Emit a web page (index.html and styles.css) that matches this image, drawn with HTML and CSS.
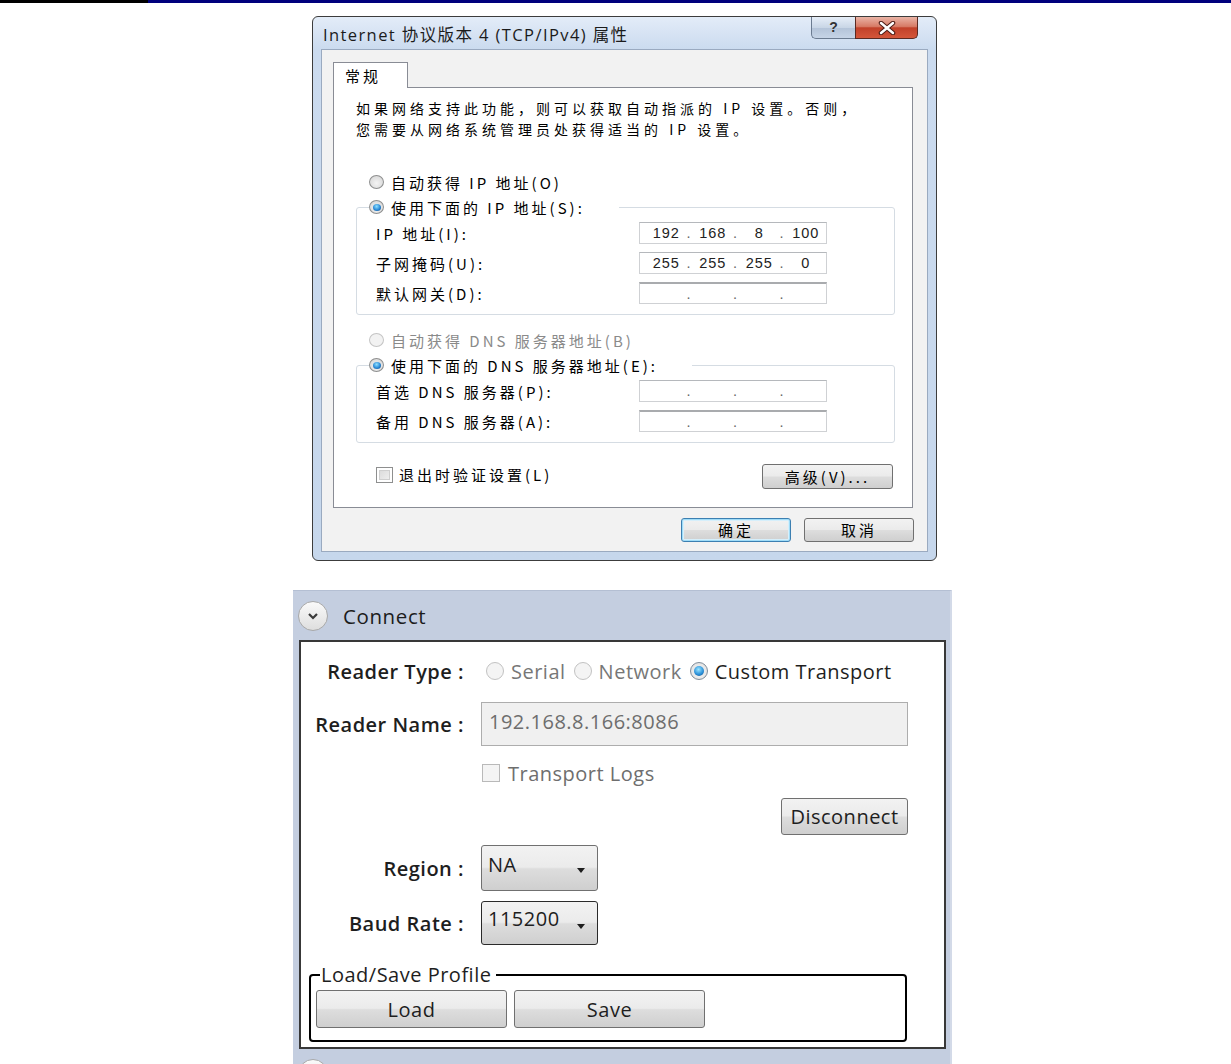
FILE: index.html
```html
<!DOCTYPE html>
<html lang="zh-CN">
<head>
    <meta charset="UTF-8">
    <meta name="viewport" content="width=device-width, initial-scale=1.0">
    <title>IPv4 / Connect</title>
    <link rel="stylesheet" href="styles.css">
</head>
<body>
    <div class="topline"></div>

    <!-- Win7 style TCP/IPv4 properties dialog -->
    <div class="dialog">
        <div class="titlebar">
            <span class="title">Internet 协议版本 4 (TCP/IPv4) 属性</span>
            <div class="caption-btns">
                <span class="cap-help">?</span>
                <span class="cap-close">
                    <svg width="18" height="14" viewBox="0 0 18 14">
                        <path d="M3 2 L15 12 M15 2 L3 12" stroke="#4a1a14" stroke-width="4.5" stroke-linecap="round"/>
                        <path d="M3 2 L15 12 M15 2 L3 12" stroke="#fff" stroke-width="2.5" stroke-linecap="round"/>
                    </svg>
                </span>
            </div>
        </div>
        <div class="client">
            <div class="tabs"><span class="tab">常规</span></div>
            <div class="tabpage">
                <p class="intro">如果网络支持此功能，则可以获取自动指派的 IP 设置。否则，<br>您需要从网络系统管理员处获得适当的 IP 设置。</p>

                <div class="opt"><span class="radio"></span>自动获得 IP 地址(O)</div>
                <fieldset class="grp">
                    <legend class="opt"><span class="radio on"></span>使用下面的 IP 地址(S):</legend>
                    <div class="row">
                        <span class="lbl">IP 地址(I):</span>
                        <span class="ipbox">
                            <span class="oct">192</span><span class="oct">168</span><span class="oct">8</span><span class="oct">100</span>
                        </span>
                    </div>
                    <div class="row">
                        <span class="lbl">子网掩码(U):</span>
                        <span class="ipbox">
                            <span class="oct">255</span><span class="oct">255</span><span class="oct">255</span><span class="oct">0</span>
                        </span>
                    </div>
                    <div class="row">
                        <span class="lbl">默认网关(D):</span>
                        <span class="ipbox dark-top">
                            <span class="oct"></span><span class="oct"></span><span class="oct"></span><span class="oct"></span>
                        </span>
                    </div>
                </fieldset>

                <div class="opt disabled"><span class="radio"></span>自动获得 DNS 服务器地址(B)</div>
                <fieldset class="grp">
                    <legend class="opt"><span class="radio on"></span>使用下面的 DNS 服务器地址(E):</legend>
                    <div class="row">
                        <span class="lbl">首选 DNS 服务器(P):</span>
                        <span class="ipbox">
                            <span class="oct"></span><span class="oct"></span><span class="oct"></span><span class="oct"></span>
                        </span>
                    </div>
                    <div class="row">
                        <span class="lbl">备用 DNS 服务器(A):</span>
                        <span class="ipbox dark-top">
                            <span class="oct"></span><span class="oct"></span><span class="oct"></span><span class="oct"></span>
                        </span>
                    </div>
                </fieldset>

                <div class="check-row">
                    <span class="check"><span class="box"></span>退出时验证设置(L)</span>
                    <button class="wbtn advanced">高级(V)...</button>
                </div>
            </div>
            <div class="dlg-btns">
                <button class="wbtn default">确定</button>
                <button class="wbtn">取消</button>
            </div>
        </div>
    </div>

    <!-- Reader connect panel -->
    <div class="panel">
        <div class="panel-head">
            <span class="chev">
                <svg width="14" height="10" viewBox="0 0 14 10">
                    <path d="M3 3 L7 7 L11 3" fill="none" stroke="#3a3a3a" stroke-width="2.2"/>
                </svg>
            </span>
            <span class="panel-title">Connect</span>
        </div>
        <div class="panel-body">
            <div class="frow type-row">
                <span class="flabel">Reader Type :</span>
                <span class="ropt off"><span class="pradio"></span>Serial</span>
                <span class="ropt off"><span class="pradio"></span>Network</span>
                <span class="ropt"><span class="pradio on"></span>Custom Transport</span>
            </div>
            <div class="frow name-row">
                <span class="flabel">Reader Name :</span>
                <span class="textbox">192.168.8.166:8086</span>
            </div>
            <div class="frow logs-row">
                <span class="flabel"></span>
                <span class="pcheck"><span class="pbox"></span>Transport Logs</span>
            </div>
            <div class="frow disc-row">
                <button class="pbtn disconnect">Disconnect</button>
            </div>
            <div class="frow sel-row">
                <span class="flabel">Region :</span>
                <span class="combo">NA</span>
            </div>
            <div class="frow sel-row">
                <span class="flabel">Baud Rate :</span>
                <span class="combo focused">115200</span>
            </div>
            <fieldset class="profile">
                <legend>Load/Save Profile</legend>
                <button class="pbtn wide">Load</button>
                <button class="pbtn wide">Save</button>
            </fieldset>
        </div>
        <div class="panel-head">
            <span class="chev"></span>
        </div>
    </div>
</body>
</html>
```

FILE: styles.css
```css
body {
    margin: 0;
    background: #fff;
    font-family: "Open Sans", "Noto Sans", sans-serif;
    overflow: hidden;
}
.topline {
    height: 3px;
    background: linear-gradient(to right, #000 148px, #00007c 148px);
}

/* ---------- dialog ---------- */
.dialog {
    margin: 13px 0 0 312px;
    width: 625px;
    height: 545px;
    box-sizing: border-box;
    border: 1px solid #3c3c3c;
    border-radius: 6px;
    background: linear-gradient(to bottom, #e3ecf8 0, #cbdbef 32px, #c6d7ec 100%);
    font-family: "Noto Sans CJK SC", sans-serif;
    font-size: 15px;
    letter-spacing: 3px;
    color: #000;
    display: flex;
    flex-direction: column;
}
.titlebar {
    height: 32px;
    display: flex;
    justify-content: space-between;
    align-items: flex-start;
    padding: 0 18px 0 10px;
}
.title {
    font-family: "Open Sans", "Noto Sans CJK SC", sans-serif;
    font-size: 16.5px;
    letter-spacing: 1.4px;
    color: #1b1b1b;
    margin-top: 5px;
}
.caption-btns {
    display: flex;
    height: 22px;
}
.cap-help {
    width: 43px;
    border: 1px solid #6b7b90;
    border-top: none;
    border-right: none;
    border-radius: 0 0 0 5px;
    background: linear-gradient(#e6eef8 0, #c9d6e6 50%, #b3c3d8 51%, #c6d4e6 100%);
    font-family: "Liberation Sans", sans-serif;
    font-size: 14px;
    font-weight: bold;
    letter-spacing: 0;
    color: #333;
    text-align: center;
    line-height: 20px;
}
.cap-close {
    width: 61px;
    border: 1px solid #5a2a22;
    border-top: none;
    border-radius: 0 0 5px 0;
    background: linear-gradient(#eab4a6 0, #d77b66 45%, #c1412a 52%, #d4563a 100%);
    display: flex;
    align-items: center;
    justify-content: center;
}
.client {
    flex: 1;
    margin: 0 8px 8px;
    border: 1px solid #9aaac0;
    background: #f2f2f2;
    padding: 12px 13px 0 11px;
}
.tabs {
    display: flex;
}
.tab {
    width: 75px;
    height: 26px;
    box-sizing: border-box;
    border: 1px solid #898c95;
    border-bottom: none;
    background: #fff;
    padding: 2px 0 0 11px;
    margin-bottom: -1px;
    position: relative;
}
.tabpage {
    height: 421px;
    box-sizing: border-box;
    border: 1px solid #898c95;
    background: #fff;
    padding: 0 17px 0 22px;
    margin-right: 1px;
}
.intro {
    margin: 10px 0 0;
    font-size: 14px;
    letter-spacing: 4px;
    line-height: 20.5px;
}
.opt {
    display: flex;
    align-items: center;
    height: 18px;
    margin: 34px 0 0 13px;
}
.opt.disabled {
    color: #8a8a8a;
    margin-top: 16px;
}
.radio {
    width: 15px;
    height: 14px;
    border-radius: 50%;
    border: 1px solid #8e8f8f;
    background: radial-gradient(circle at 50% 60%, #f4f4f4 0, #dcdcdc 70%, #cfcfcf 100%);
    margin-right: 7px;
    box-sizing: border-box;
    display: flex;
    align-items: center;
    justify-content: center;
}
.opt.disabled .radio {
    border-color: #c4c4c4;
    background: #f2f2f2;
}
.radio.on::after {
    content: "";
    width: 8px;
    height: 7px;
    border-radius: 50%;
    background: radial-gradient(circle at 45% 35%, #8fe0ff 0, #2a8ad8 55%, #0d3f7a 100%);
}
.grp {
    margin: 7px 0 0;
    border: 1px solid #d5dce3;
    border-radius: 3px;
    padding: 6px 12px 10px;
}
.grp legend {
    margin: 0;
    padding: 0 34px 0 0;
}
.row {
    display: grid;
    grid-template-columns: 263px 188px;
    align-items: center;
    height: 22px;
    margin: 0 0 8px 7px;
}
.row:last-child {
    margin-bottom: 0;
}
.lbl {
    white-space: nowrap;
}
.ipbox {
    height: 22px;
    box-sizing: border-box;
    border: 1px solid #cfd1d4;
    border-top-color: #b5b8bc;
    background: #fff;
    display: flex;
    font-family: "Liberation Sans", sans-serif;
    font-size: 14.5px;
    letter-spacing: 1px;
    line-height: 20px;
    color: #222;
}
.ipbox.dark-top {
    border-top: 2px solid #a9abae;
}
/* one octet: separator dot, then the number centred in what is left */
.oct {
    flex: 1;
    display: grid;
    grid-template-columns: 6px 1fr;
    text-align: center;
}
.oct::before {
    content: "";
    text-align: left;
    color: #666;
}
.oct + .oct::before {
    content: ".";
}
.check-row {
    display: flex;
    justify-content: space-between;
    align-items: center;
    margin: 21px 2px 0 20px;
    height: 25px;
}
.check {
    display: flex;
    align-items: center;
    margin-top: -4px;
}
.check .box {
    width: 17px;
    height: 16px;
    box-sizing: border-box;
    border: 1px solid #8e8f8f;
    background: linear-gradient(135deg, #d6d6d6, #f4f4f4);
    box-shadow: inset 0 0 0 2px #fff, inset 0 0 0 3px #cfcfcf;
    margin-right: 6px;
}
.wbtn {
    font-family: "Noto Sans CJK SC", sans-serif;
    font-size: 15px;
    letter-spacing: 3px;
    color: #000;
    border: 1px solid #707070;
    border-radius: 3px;
    background: linear-gradient(#f2f2f2 0, #ebebeb 48%, #dddddd 52%, #cfcfcf 100%);
    padding: 0;
    line-height: 20px;
}
.advanced {
    width: 131px;
    height: 25px;
}
.dlg-btns {
    display: flex;
    justify-content: flex-end;
    gap: 13px;
    margin-top: 10px;
}
.dlg-btns .wbtn {
    width: 110px;
    height: 24px;
}
.wbtn.default {
    border-color: #3c7fb1;
    box-shadow: inset 0 0 0 1px #9fdcf8, inset 0 0 0 2px #d6effb;
}

/* ---------- connect panel ---------- */
.panel {
    margin: 29px 0 0 293px;
    width: 659px;
    background: #c4cee0;
    border-top: 1px solid #b4bfd3;
    border-right: 2px solid #d3dae8;
    box-sizing: border-box;
}
.panel-head {
    height: 49px;
    display: flex;
    align-items: center;
    padding-left: 5px;
    gap: 15px;
}
.chev {
    width: 30px;
    height: 30px;
    box-sizing: border-box;
    border-radius: 50%;
    border: 1px solid #a9a9a9;
    background: linear-gradient(#fafafa, #dedede);
    display: flex;
    align-items: center;
    justify-content: center;
}
.panel-title {
    font-size: 20.5px;
    letter-spacing: 0.6px;
    color: #1c1c1c;
}
.panel-body {
    margin-left: 6px;
    width: 647px;
    height: 409px;
    box-sizing: border-box;
    border: 2px solid #383838;
    background: #fff;
    padding-top: 10px;
    font-size: 20px;
    letter-spacing: 0.5px;
    color: #6e6e6e;
}
.frow {
    display: flex;
    align-items: center;
}
.flabel {
    width: 163px;
    flex: none;
    text-align: right;
    font-weight: 600;
    color: #1e1e1e;
    margin-right: 17px;
    white-space: nowrap;
}
.type-row {
    height: 38px;
}
.ropt {
    display: flex;
    align-items: center;
    color: #1e1e1e;
    margin-right: 6px;
    margin-left: 5px;
}
.ropt.off {
    color: #777;
    margin-left: 5px;
    margin-right: 3px;
}
.pradio {
    width: 18px;
    height: 18px;
    box-sizing: border-box;
    border-radius: 50%;
    border: 1px solid #a8a8a8;
    background: radial-gradient(circle at 50% 55%, #f8f8f8 0, #e4e4e4 70%, #d8d8d8 100%);
    margin-right: 7px;
    display: flex;
    align-items: center;
    justify-content: center;
}
.ropt.off .pradio {
    border-color: #c2c2c2;
    background: #f4f4f4;
}
.pradio.on {
    border-color: #7f8c99;
}
.pradio.on::after {
    content: "";
    width: 10px;
    height: 10px;
    border-radius: 50%;
    background: radial-gradient(circle at 45% 35%, #9be6ff 0, #2d93db 55%, #0c4a86 100%);
}
.name-row {
    margin-top: 12px;
    height: 44px;
}
.textbox {
    width: 427px;
    height: 44px;
    box-sizing: border-box;
    border: 1px solid #adadad;
    background: #f0f0f0;
    padding: 5px 0 0 7px;
    color: #6d6d6d;
}
.logs-row {
    margin-top: 14px;
    height: 26px;
}
.pcheck {
    display: flex;
    align-items: center;
    margin-left: 1px;
}
.pbox {
    width: 18px;
    height: 18px;
    box-sizing: border-box;
    border: 1px solid #b9b9b9;
    background: #f4f4f4;
    margin-right: 8px;
}
.disc-row {
    margin-top: 12px;
    justify-content: flex-end;
    padding-right: 36px;
}
.pbtn {
    font-family: "Open Sans", "Noto Sans", sans-serif;
    font-size: 20px;
    letter-spacing: 0.5px;
    color: #1e1e1e;
    border: 1px solid #707070;
    border-radius: 3px;
    background: linear-gradient(#f2f2f2 0, #ebebeb 48%, #dddddd 52%, #cfcfcf 100%);
    padding: 0;
}
.disconnect {
    width: 127px;
    height: 37px;
}
.sel-row {
    margin-top: 10px;
    height: 46px;
}
.sel-row + .sel-row {
    height: 44px;
}
.combo {
    width: 117px;
    height: 100%;
    box-sizing: border-box;
    border: 1px solid #707070;
    border-radius: 3px;
    background: linear-gradient(#f2f2f2 0, #ebebeb 48%, #dddddd 52%, #cfcfcf 100%);
    display: flex;
    justify-content: space-between;
    align-items: flex-start;
    padding: 5px 12px 0 6px;
    color: #1e1e1e;
}
.combo::after {
    content: "";
    margin-top: 17px;
    border-left: 4px solid transparent;
    border-right: 4px solid transparent;
    border-top: 5px solid #1e1e1e;
}
.combo.focused {
    border-color: #2a2a2a;
    padding-top: 3px;
}
.combo.focused::after {
    margin-top: 19px;
}
.profile {
    margin: 19px 0 0 8px;
    width: 598px;
    height: 78px;
    box-sizing: border-box;
    border: 2px solid #000;
    border-radius: 4px;
    padding: 0 0 0 5px;
    display: flex;
    gap: 7px;
}
.profile legend {
    color: #1e1e1e;
    padding: 0 5px 0 1px;
    margin-left: 4px;
    line-height: 22px;
}
.pbtn.wide {
    width: 191px;
    height: 38px;
    margin-top: 4px;
}
```
